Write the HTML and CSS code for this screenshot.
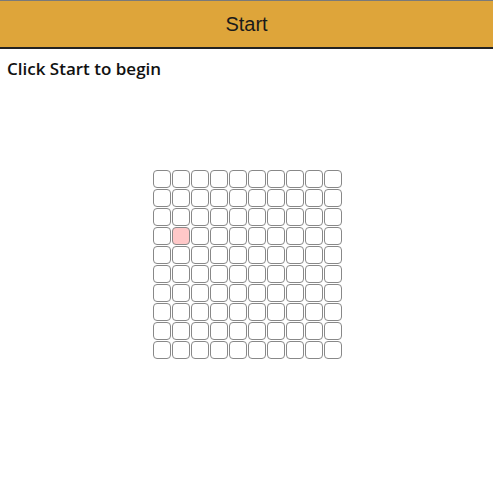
FILE: index.html
```html
<!DOCTYPE html>
<html>
<head>
<meta charset="utf-8">
<link rel="stylesheet" href="styles.css">
</head>
<body>
<button class="start">Start</button>
<div class="status">Click Start to begin</div>
<div class="board" id="board"></div>
<script>
const b = document.getElementById('board');
for (let r = 0; r < 10; r++) {
  for (let c = 0; c < 10; c++) {
    const d = document.createElement('div');
    d.className = 'cell' + (r === 3 && c === 1 ? ' hit' : '');
    b.appendChild(d);
  }
}
</script>
</body>
</html>
```
FILE: styles.css
```css
html, body { margin: 0; padding: 0; background: #fff; }
.start {
  display: block;
  width: 100%;
  height: 49px;
  margin: 0;
  padding: 0;
  background: #dea53a;
  border: none;
  border-top: 1px solid #7a7a7a;
  border-bottom: 2px solid #222;
  font-family: "Liberation Sans", Arial, sans-serif;
  font-size: 20px;
  color: #1a1a1a;
}
.status {
  font-family: "Open Sans", sans-serif;
  font-weight: 600;
  font-size: 17px;
  color: #111;
  padding: 8px 0 0 7px;
  line-height: 23px;
}
.board {
  display: grid;
  grid-template-columns: repeat(10, 18px);
  grid-auto-rows: 18px;
  gap: 1px;
  width: max-content;
  padding-left: 2px;
  margin: 90px auto 0;
}
.cell {
  box-sizing: border-box;
  border: 1px solid #888;
  border-radius: 4px;
  background: #fff;
}
.cell.hit { background: #ffc8c8; }
```
